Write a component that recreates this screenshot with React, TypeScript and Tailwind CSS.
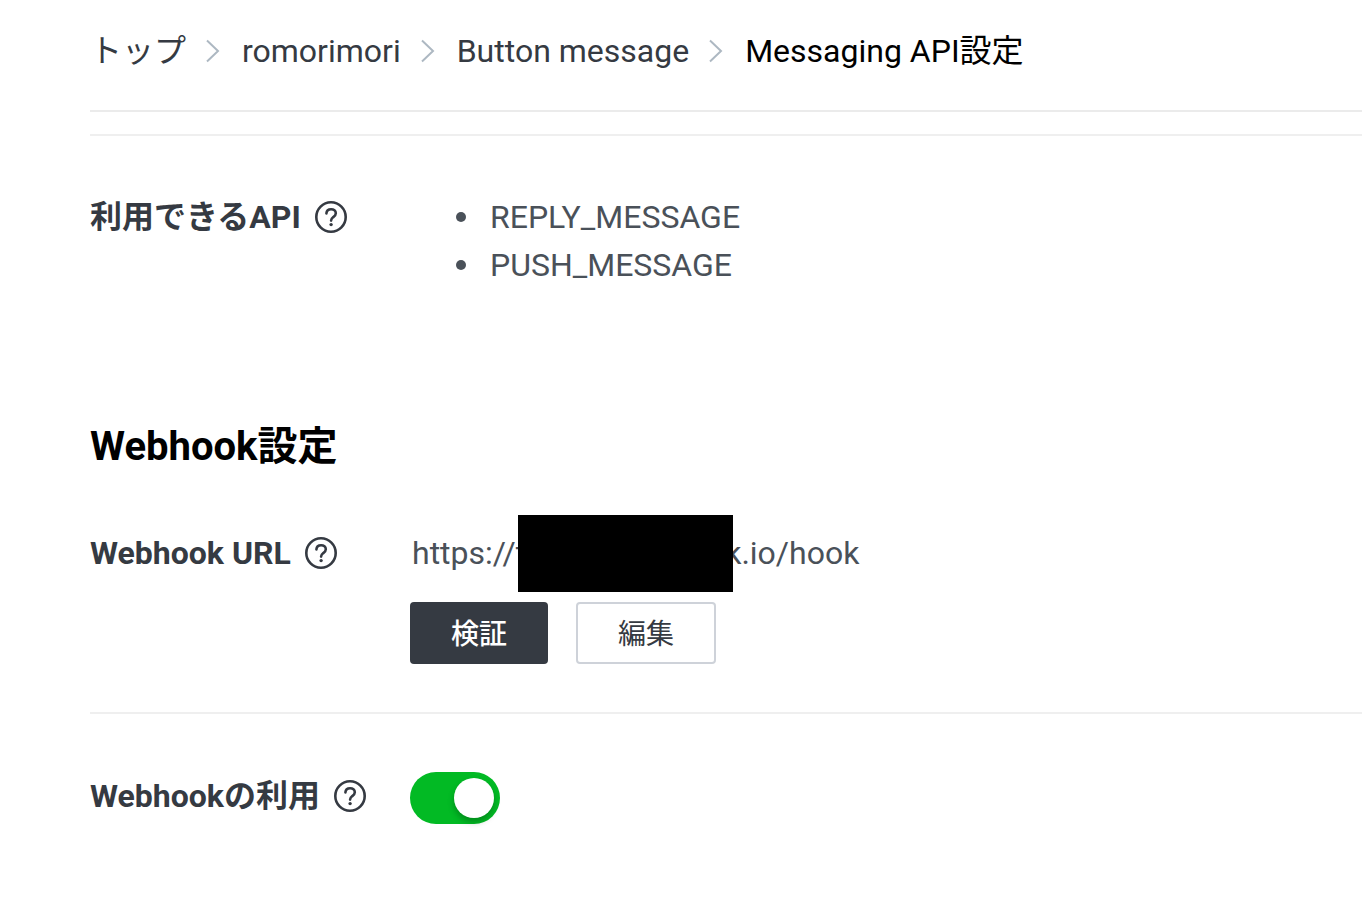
import { Fragment, useState } from "react";
import type { ReactNode } from "react";

const crumbs = ["トップ", "romorimori", "Button message"];
const apis = ["REPLY_MESSAGE", "PUSH_MESSAGE"];

function Chevron() {
  return (
    <svg viewBox="0 0 14 24" fill="none" className="mr-[22px] ml-5 h-6 w-[14px] shrink-0" aria-hidden="true">
      <path d="M1 1.5L12 12L1 22.5" stroke="#adb8c2" strokeWidth="2" />
    </svg>
  );
}

function HelpButton({ label }: { label: string }) {
  return (
    <button type="button" aria-label={label} className="shrink-0 text-[#353a42]">
      <svg viewBox="0 0 32 32" fill="none" className="block h-8 w-8" aria-hidden="true">
        <circle cx="16" cy="16" r="14.7" stroke="currentColor" strokeWidth="2.6" />
        <path
          d="M11.4 12.4C11.6 9.8 13.5 8.2 16.1 8.2C18.8 8.2 20.8 9.8 20.8 12.2C20.8 14 19.8 15 18.3 16.1C16.8 17.3 16.1 18 16.1 19.6"
          stroke="currentColor"
          strokeWidth="2.6"
          strokeLinecap="round"
        />
        <circle cx="16.1" cy="23.6" r="1.7" fill="currentColor" />
      </svg>
    </button>
  );
}

function SettingRow({ label, children }: { label: ReactNode; children: ReactNode }) {
  return (
    <div className="flex items-start">
      <div className="flex h-12 w-80 shrink-0 items-center gap-[14px] text-[32px] leading-[48px] font-bold whitespace-nowrap text-[#353a42]">
        {label}
      </div>
      <div className="min-w-0 flex-1">{children}</div>
    </div>
  );
}

export default function App() {
  const [webhookEnabled, setWebhookEnabled] = useState(true);

  return (
    <div
      lang="ja"
      className="min-h-screen bg-white pl-[90px] font-[Roboto,'Noto_Sans_CJK_JP',sans-serif] text-[32px] leading-[48px] text-[#4a5159]"
    >
      {/* Breadcrumb */}
      <nav aria-label="breadcrumb" className="flex items-center border-b-2 border-[#ebebeb] pt-[27px] pb-[35px] whitespace-nowrap">
        {crumbs.map((crumb) => (
          <Fragment key={crumb}>
            <a href="#" className="text-[#353a42]">
              {crumb}
            </a>
            <Chevron />
          </Fragment>
        ))}
        <span aria-current="page" className="text-black">
          Messaging API設定
        </span>
      </nav>

      <main>
        {/* Available APIs */}
        <section className="mt-[22px] border-t-2 border-[#efefef] pt-[57px]">
          <SettingRow
            label={
              <>
                <h2>利用できるAPI</h2>
                <HelpButton label="利用できるAPIのヘルプ" />
              </>
            }
          >
            <ul className="pl-[46px]">
              {apis.map((api) => (
                <li
                  key={api}
                  className="flex items-center gap-6 before:size-[10px] before:shrink-0 before:rounded-full before:bg-[#4a5159]"
                >
                  {api}
                </li>
              ))}
            </ul>
          </SettingRow>
        </section>

        {/* Webhook settings */}
        <section className="pt-32">
          <h2 className="text-[40px] leading-[60px] font-bold text-black">Webhook設定</h2>

          <div className="border-b-2 border-[#efefef] pt-[52px] pb-12">
            <SettingRow
              label={
                <>
                  <h3>Webhook URL</h3>
                  <HelpButton label="Webhook URLのヘルプ" />
                </>
              }
            >
              <div className="flex h-12 items-center pl-0.5 whitespace-nowrap">
                <span>https://t</span>
                <span className="relative -mx-2 h-[77px] w-[215px] bg-black" />
                <span>k.io/hook</span>
              </div>
              <div className="mt-[25px] flex gap-7 text-[28px]">
                <button type="button" className="rounded-sm bg-[#353a42] px-[41px] pt-1 leading-[58px] font-medium text-white">
                  検証
                </button>
                <button
                  type="button"
                  className="rounded-sm border-2 border-[#ced2d9] bg-white px-10 pt-1 leading-[54px] text-[#353a42]"
                >
                  編集
                </button>
              </div>
            </SettingRow>
          </div>

          <div className="py-[58px]">
            <SettingRow
              label={
                <>
                  <label htmlFor="webhook-enabled">Webhookの利用</label>
                  <HelpButton label="Webhookの利用のヘルプ" />
                </>
              }
            >
              <input
                id="webhook-enabled"
                type="checkbox"
                role="switch"
                checked={webhookEnabled}
                onChange={(e) => setWebhookEnabled(e.target.checked)}
                className="flex h-[52px] w-[90px] cursor-pointer appearance-none items-center rounded-full bg-[#c8c8c8] px-[6px] before:block before:size-10 before:rounded-full before:bg-white before:shadow-[0_4px_6px_rgba(0,0,0,0.25)] checked:justify-end checked:bg-[#02ba24]"
              />
            </SettingRow>
          </div>
        </section>
      </main>
    </div>
  );
}
